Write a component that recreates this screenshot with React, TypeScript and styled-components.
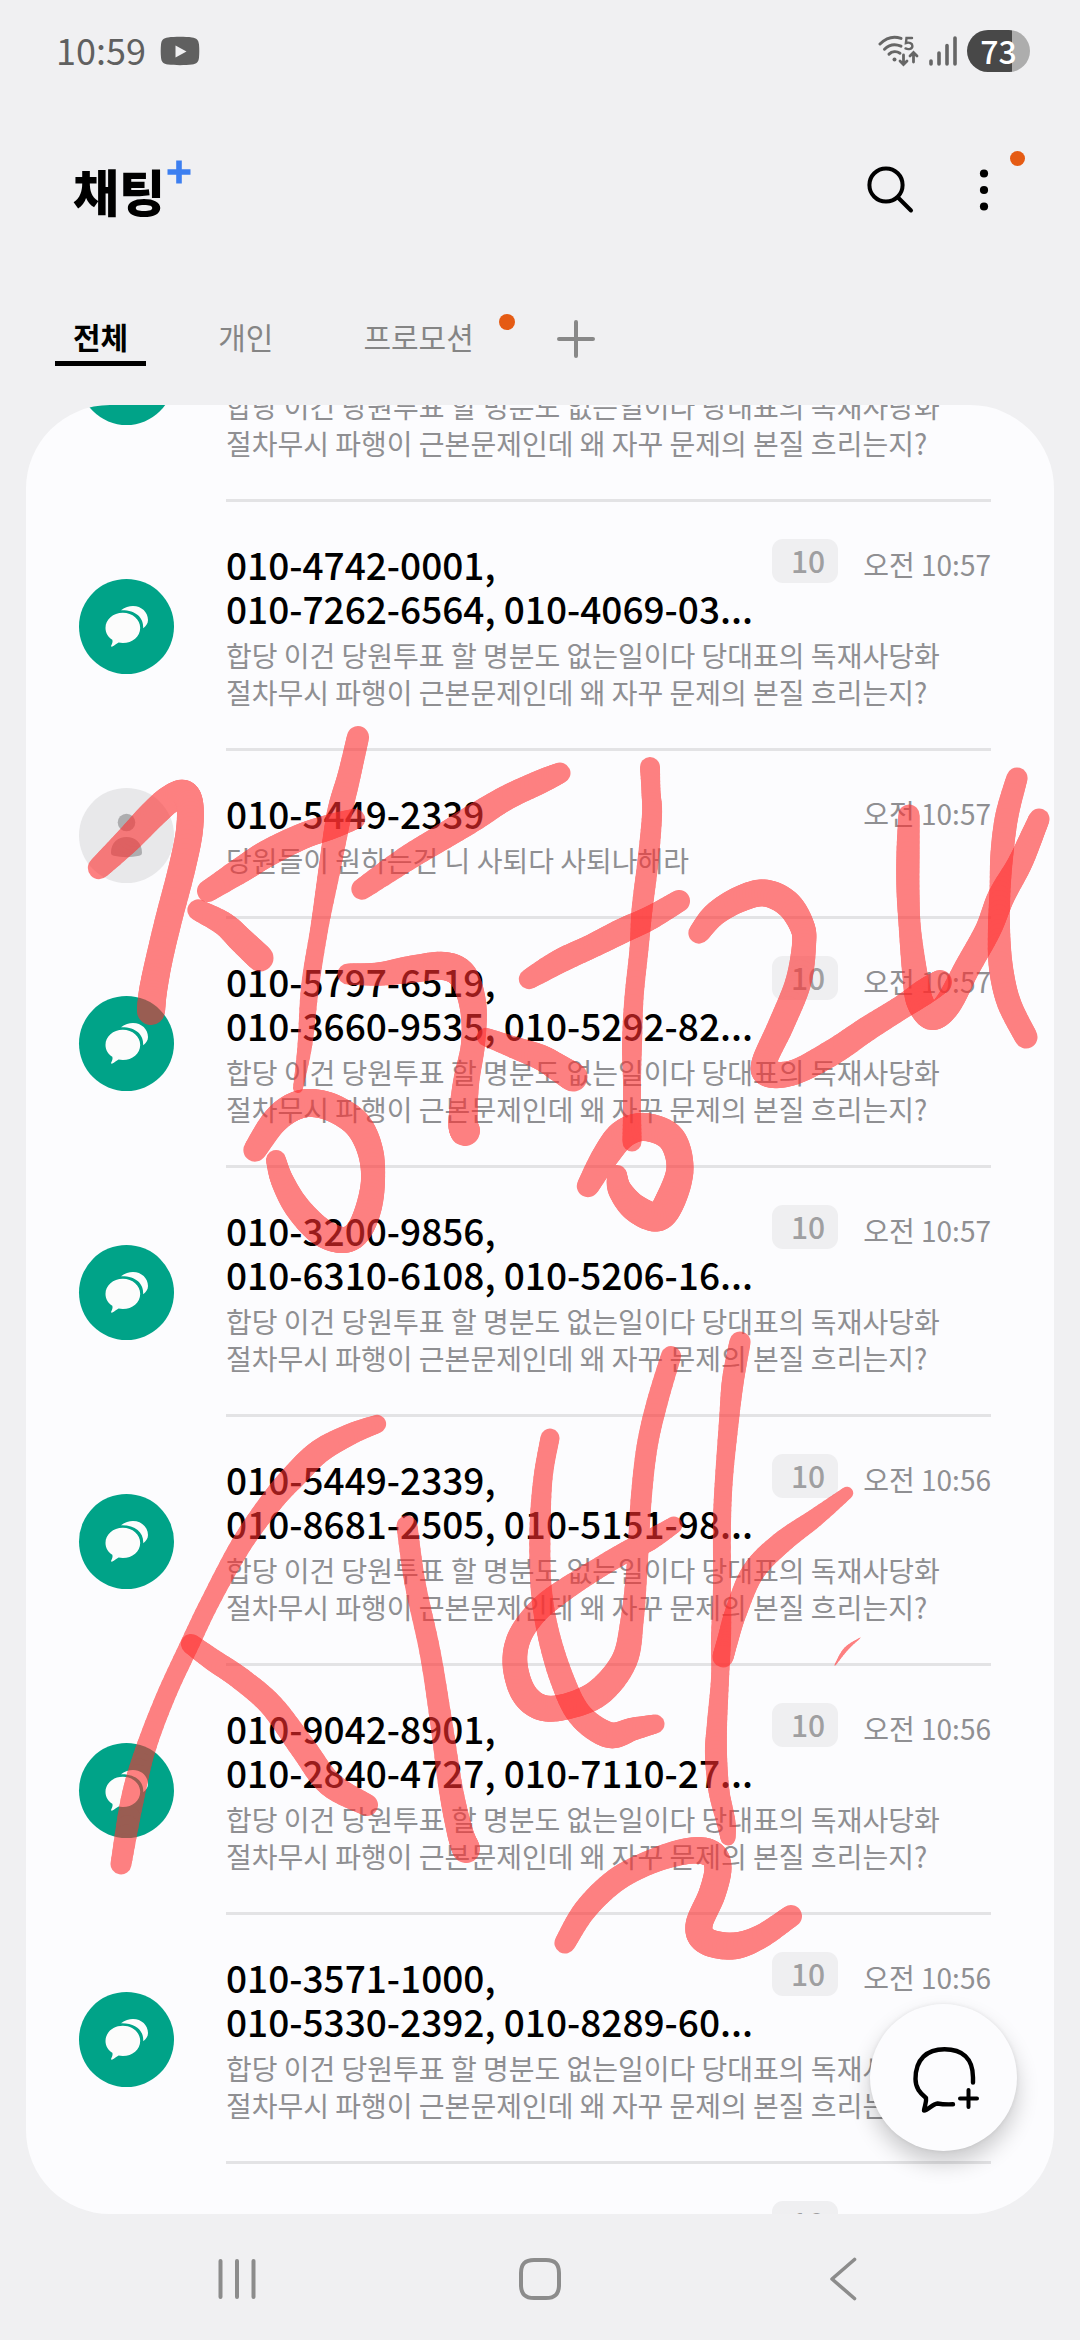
import React, { useLayoutEffect, useRef, useState } from "react";
import styled, { createGlobalStyle } from "styled-components";

const GlobalStyle = createGlobalStyle`
  * { box-sizing: border-box; }
  body {
    margin: 0;
    background: #f0f0f2;
    color: #000;
    font-family: "Noto Sans CJK KR", "Noto Sans", sans-serif;
  }
  button { font: inherit; color: inherit; background: none; border: 0; padding: 0; cursor: pointer; }
  a { color: inherit; text-decoration: none; }
  ul { list-style: none; margin: 0; padding: 0; }
  svg { display: block; }
`;

const Screen = styled.div`
  position: relative;
  display: flex;
  flex-direction: column;
  height: 100vh;
  overflow: hidden;
`;

/* ---------- status bar ---------- */

const StatusBar = styled.div`
  display: flex;
  align-items: center;
  justify-content: space-between;
  height: 102px;
  padding: 0 50px 0 56px;
  flex: none;
`;

const StatusGroup = styled.div<{ $gap: number }>`
  display: flex;
  align-items: center;
  gap: ${(p) => p.$gap}px;
`;

const Clock = styled.span`
  padding-bottom: 4px;
  font-size: 36px;
  line-height: 42px;
  color: #606060;
`;

const Battery = styled.span`
  width: 63px;
  height: 42px;
  border-radius: 21px;
  background: linear-gradient(to right, #484848 72%, #adadad 72%);
  color: #fff;
  font-size: 32px;
  font-weight: 500;
  line-height: 40px;
  text-align: center;
`;

/* ---------- header ---------- */

const Header = styled.header`
  display: flex;
  align-items: center;
  justify-content: space-between;
  height: 176px;
  padding: 0 60px 0 73px;
  flex: none;
`;

const Logo = styled.h1`
  display: flex;
  align-items: center;
  gap: 2px;
  margin: 0;
  font-size: 50px;
  font-weight: 900;
  line-height: 64px;
`;

const LogoPlus = styled.svg`
  align-self: flex-start;
  margin-top: 2px;
`;

const Actions = styled.div`
  display: flex;
  gap: 22px;
`;

const IconButton = styled.button`
  position: relative;
  display: grid;
  place-items: center;
  width: 72px;
  height: 72px;
`;

const Dot = styled.i<{ $size: number; $top: number; $right: number }>`
  position: absolute;
  top: ${(p) => p.$top}px;
  right: ${(p) => p.$right}px;
  width: ${(p) => p.$size}px;
  height: ${(p) => p.$size}px;
  border-radius: 50%;
  background: #e55b14;
`;

/* ---------- tabs ---------- */

const Tabs = styled.nav`
  display: flex;
  align-items: flex-start;
  gap: 54px;
  height: 127px;
  padding: 32px 55px 0;
  flex: none;
`;

const Tab = styled.button<{ $active: boolean }>`
  position: relative;
  height: 56px;
  padding: 0 18px;
  border-bottom: 5px solid ${(p) => (p.$active ? "#000" : "transparent")};
  color: ${(p) => (p.$active ? "#000" : "#858585")};
  font-size: 30px;
  font-weight: ${(p) => (p.$active ? 700 : 400)};
  line-height: 50px;
`;

const AddTab = styled.button`
  display: grid;
  place-items: center;
  width: 60px;
  height: 58px;
`;

/* ---------- conversation list ---------- */

const Panel = styled.main`
  flex: 1;
  min-height: 0;
  margin: 0 26px;
  border-radius: 84px;
  background: #fcfcfe;
  overflow: hidden;
  display: flex;
`;

const Scroller = styled.ul`
  flex: 1;
  min-width: 0;
  overflow-y: auto;
  scrollbar-width: none;
`;

const Row = styled.a`
  display: flex;
  align-items: center;
  gap: 52px;
  padding: 0 63px 0 53px;
`;

const Avatar = styled.span<{ $group: boolean }>`
  flex: none;
  width: 95px;
  height: 95px;
  border-radius: 50%;
  overflow: hidden;
  background: ${(p) => (p.$group ? "#00a388" : "#e8e8ea")};
`;

const Body = styled.div`
  flex: 1;
  min-width: 0;
  padding: 40px 0 37px;
  border-bottom: 3px solid #e3e3e5;
`;

const RowHead = styled.div`
  display: flex;
  align-items: flex-start;
  gap: 14px;
`;

const Numbers = styled.div`
  flex: 1;
  min-width: 0;
  font-size: 37px;
  font-weight: 500;
  line-height: 44px;
`;

const NumberLine = styled.div`
  min-height: 44px;
  white-space: nowrap;
`;

const Meta = styled.div`
  display: flex;
  align-items: center;
  gap: 23px;
  height: 44px;
`;

const Count = styled.span`
  align-self: flex-start;
  width: 66px;
  height: 44px;
  margin-top: -3px;
  padding-left: 6px;
  border-radius: 11px;
  background: #efeff1;
  color: #9f9fa1;
  font-size: 30px;
  font-weight: 500;
  line-height: 42px;
  text-align: center;
`;

const Time = styled.time`
  min-width: 130px;
  color: #8f8f92;
  font-size: 28px;
  line-height: 44px;
  text-align: right;
`;

const Preview = styled.p`
  margin: 7px 0 0;
  color: #8f8f92;
  font-size: 28px;
  line-height: 37px;
  word-break: keep-all;
`;

const ComposeButton = styled.button`
  position: absolute;
  right: 63px;
  bottom: 189px;
  width: 147px;
  height: 147px;
  border-radius: 50%;
  background: #fcfcfe;
  box-shadow: 0 12px 22px rgba(0, 0, 0, 0.2), 0 0 4px rgba(0, 0, 0, 0.08);
`;

/* ---------- navigation bar ---------- */

const NavBar = styled.nav`
  display: flex;
  height: 126px;
  padding: 4px 86px 0;
  flex: none;
`;

const NavButton = styled.button`
  flex: 1;
  display: grid;
  place-items: center;
`;

const InkLayer = styled.svg`
  position: absolute;
  top: 0;
  left: 0;
  width: 100%;
  height: auto;
  pointer-events: none;
`;

/* ---------- icons ---------- */

const YoutubeIcon = () => (
  <svg width="40" height="30" viewBox="0 0 40 30">
    <path d="M8 1.4C15 .6 25 .6 32 1.4c4.600.5 6.600 2.600 7 7 .4 4.600.4 8.600 0 13.200-.4 4.400-2.400 6.500-7 7-7 .8-17 .8-24 0-4.600-.5-6.600-2.600-7-7-.4-4.600-.4-8.600 0-13.200.4-4.400 2.400-6.500 7-7z" fill="#606060" />
    <path d="M15.500 9.500v12L26.500 15.500z" fill="#f0f0f2" />
  </svg>
);

const WifiIcon = () => (
  <svg width="41" height="32" viewBox="0 0 41 32" fill="none" stroke="#666" strokeWidth="3" strokeLinecap="round">
    <path d="M2 9C9 2 16 .8 23 3.400" />
    <path d="M6.500 14.200C11 9.800 17 8.600 23 11.200" />
    <path d="M11 19.200c3-2.900 7.500-3.200 11-1" />
    <circle cx="16.500" cy="24.500" r="2" fill="#666" stroke="none" />
    <path d="M34 3h-5.500l-.6 5c3.500-1 6.500.2 6.500 2.900 0 3-3.700 4-6.900 2.500" strokeWidth="2.400" />
    <path d="M25.500 20v8.500M22 26l3.500 3.500L29 26" strokeWidth="2.800" />
    <path d="M35.500 27v-9M32 21l3.500-3.500L39 21" strokeWidth="2.800" />
  </svg>
);

const SignalIcon = () => (
  <svg width="28" height="30" viewBox="0 0 28 30" stroke="#666" strokeWidth="3.600" strokeLinecap="round">
    <path d="M2 25v3M10 17v11M18 9.500v18.500M26 2v26" />
  </svg>
);

const SearchIcon = () => (
  <svg width="48" height="48" viewBox="0 0 48 48" fill="none" stroke="#000" strokeWidth="4" strokeLinecap="round">
    <circle cx="20" cy="19" r="16.600" />
    <path d="M32.500 32L45 44.500" />
  </svg>
);

const MoreIcon = () => (
  <svg width="10" height="42" viewBox="0 0 10 42">
    <circle cx="5" cy="4.500" r="4.100" />
    <circle cx="5" cy="21" r="4.100" />
    <circle cx="5" cy="37.500" r="4.100" />
  </svg>
);

const PlusIcon = () => (
  <svg width="38" height="38" viewBox="0 0 38 38" stroke="#888" strokeWidth="4" strokeLinecap="round">
    <path d="M19 2v34M2 19h34" />
  </svg>
);

const GroupIcon = () => (
  <svg width="95" height="95" viewBox="0 0 95 95" fill="#fcfcfc">
    <path d="M43.800 33.800c9.700 0 17.400 6.700 17.400 15.100S53.500 64 43.800 64c-1.500 0-2.800-.1-4.200-.4-2.200.9-3.900 3.300-6.700 4.100-.8.100-1-.5-.7-1.200.8-1.800 1.900-3.600 1.100-5.800-4.200-2.700-6.800-7-6.800-11.800 0-8.400 7.600-15.100 17.300-15.100z" />
    <path d="M42 31.200C46 28.200 50 27 54 27c8.500 0 15 6.300 15 14 0 3.400-1.900 6-4.800 8.200C64.900 38.500 56.500 30.800 42 31.200z" />
  </svg>
);

const PersonIcon = () => (
  <svg width="95" height="95" viewBox="0 0 95 95" fill="#adadaf">
    <circle cx="47.500" cy="34.500" r="8.800" />
    <path d="M32 64.500c0-9.700 7-15.500 15.500-15.500S63 54.800 63 64.500c0 2-.8 2.800-2.800 3.200-8 1.900-17.400 1.900-25.400 0-2-.4-2.800-1.200-2.800-3.200z" />
  </svg>
);

const ComposeIcon = () => (
  <svg width="147" height="147" viewBox="0 0 147 147" fill="none" stroke="#000" strokeWidth="4.400" strokeLinecap="round" strokeLinejoin="round">
    <path d="M103 78.500V73.500C103 54 92 45.200 74.500 45.200S45.500 55 45.500 75c0 9 4.500 14 10.500 19 .8 4.500-1.500 8.500-2 12.500 4.500-.2 8-6.500 13.500-7 5.500 1 10 1 15.500.8" />
    <path d="M98.500 86v17M90 94.500h17" strokeWidth="4" />
  </svg>
);

/* ---------- ink ---------- */

type InkPoint = [x: number, y: number, width: number];

const STROKES: InkPoint[][] = [
  [[99, 868, 21], [128, 840, 25], [152, 815, 27], [170, 799, 27], [184, 794, 27], [190, 806, 26], [189, 834, 26], [181, 872, 26], [169, 918, 26], [159, 960, 26], [153, 991, 27], [151, 1011, 27]],
  [[358, 737, 21], [349, 776, 22], [339, 815, 24], [329, 872, 21], [319, 930, 17], [310, 987, 17], [305, 1044, 14], [298, 1088, 9]],
  [[355, 819, 19], [330, 827, 24], [303, 836, 25], [268, 853, 26], [241, 870, 25], [208, 891, 21]],
  [[198, 910, 20], [224, 924, 23], [241, 940, 25], [260, 958, 26]],
  [[255, 1150, 22], [273, 1123, 25], [291, 1108, 27], [310, 1103, 27], [333, 1108, 27], [357, 1124, 27], [370, 1150, 25], [373, 1180, 23], [368, 1210, 25], [357, 1233, 25], [342, 1240, 25], [320, 1231, 27], [297, 1207, 25], [282, 1180, 22], [276, 1160, 19]],
  [[362, 889, 20], [406, 859, 24], [444, 836, 25], [475, 817, 26], [506, 798, 24], [540, 782, 23], [560, 773, 20]],
  [[348, 974, 20], [379, 974, 22], [413, 969, 26], [444, 966, 27], [463, 976, 28], [473, 1006, 26], [473, 1044, 23], [466, 1083, 25], [463, 1121, 28], [465, 1131, 29]],
  [[486, 1037, 17], [510, 1046, 20], [540, 1057, 24], [557, 1067, 26], [573, 1077, 28]],
  [[650, 767, 19], [651, 792, 18], [652, 815, 19], [648, 861, 20], [642, 910, 20], [639, 949, 18], [634, 998, 18], [632, 1044, 19], [632, 1083, 17], [632, 1113, 17], [632, 1142, 18]],
  [[529, 979, 19], [560, 961, 23], [592, 946, 23], [622, 931, 24], [650, 918, 23], [679, 901, 21]],
  [[588, 1186, 21], [606, 1155, 26], [623, 1134, 28], [645, 1127, 27], [671, 1138, 27], [680, 1168, 26], [670, 1201, 29], [657, 1217, 28], [635, 1208, 27], [620, 1190, 23], [617, 1175, 19]],
  [[699, 933, 20], [715, 914, 23], [740, 899, 25], [765, 893, 26], [788, 904, 26], [802, 926, 24], [804, 945, 23], [798, 983, 25], [781, 1025, 25], [764, 1063, 24], [770, 1074, 26], [795, 1072, 24], [833, 1052, 25], [867, 1029, 24], [902, 1007, 23], [926, 991, 25], [940, 982, 23]],
  [[909, 815, 20], [908, 853, 22], [908, 891, 22], [910, 930, 21], [915, 975, 24], [920, 1002, 26], [932, 1017, 25], [948, 1004, 26], [967, 968, 25], [988, 930, 25], [1001, 897, 26], [1019, 865, 24], [1031, 838, 22], [1039, 819, 20]],
  [[1017, 778, 20], [1007, 815, 22], [1002, 853, 22], [1000, 891, 20], [999, 930, 21], [1001, 968, 23], [1009, 1003, 23], [1026, 1037, 22]],
  [[377, 1424, 17], [351, 1434, 20], [320, 1451, 23], [296, 1474, 24], [272, 1501, 22], [241, 1545, 20], [210, 1602, 18], [188, 1648, 18], [165, 1698, 18], [145, 1751, 19], [132, 1801, 22], [121, 1864, 20]],
  [[191, 1644, 19], [213, 1660, 21], [241, 1679, 22], [272, 1706, 23], [303, 1748, 25], [330, 1784, 25], [367, 1805, 21]],
  [[407, 1526, 20], [415, 1583, 20], [430, 1652, 20], [441, 1721, 21], [451, 1790, 23], [460, 1832, 25], [466, 1849, 27]],
  [[550, 1438, 18], [543, 1478, 18], [540, 1530, 20], [541, 1586, 20], [548, 1632, 21], [562, 1679, 23], [580, 1715, 24], [609, 1735, 25], [633, 1729, 22], [655, 1724, 18]],
  [[671, 1356, 19], [657, 1403, 20], [647, 1447, 20], [641, 1501, 20], [637, 1568, 20], [632, 1621, 22], [624, 1661, 25], [598, 1693, 27], [564, 1707, 25], [540, 1707, 25], [523, 1692, 25], [515, 1664, 24], [519, 1638, 23], [535, 1614, 22], [557, 1595, 22], [592, 1572, 20], [626, 1552, 20], [650, 1540, 20], [674, 1525, 16]],
  [[740, 1342, 20], [733, 1380, 21], [729, 1420, 19], [724, 1478, 17], [722, 1523, 17], [722, 1590, 17], [721, 1639, 19], [720, 1679, 17], [717, 1724, 19], [716, 1755, 21], [719, 1791, 20], [726, 1822, 18], [728, 1838, 14]],
  [[847, 1493, 11], [815, 1518, 17], [781, 1543, 21], [753, 1572, 22], [736, 1612, 21], [728, 1639, 20], [723, 1657, 20]],
  [[565, 1943, 20], [585, 1910, 22], [616, 1880, 23], [653, 1861, 23], [688, 1851, 25], [710, 1853, 26], [718, 1867, 26], [712, 1894, 26], [699, 1925, 26], [706, 1941, 26], [733, 1946, 26], [760, 1937, 23], [791, 1916, 21]],
  [[835, 1665, 0], [846, 1649, 3], [860, 1638, 0]],
];

const catmull = (a: number, b: number, c: number, d: number, t: number) =>
  0.5 * (2 * b + (c - a) * t + (2 * a - 5 * b + 4 * c - d) * t * t + (3 * b - a - 3 * c + d) * t * t * t);

/** Splits a pressure-sensitive stroke into short segments of smoothly varying width. */
function segments(points: InkPoint[]): InkPoint[] {
  const out: InkPoint[] = [];
  const steps = 8;
  for (let i = 0; i < points.length - 1; i++) {
    const p0 = points[Math.max(i - 1, 0)];
    const p1 = points[i];
    const p2 = points[i + 1];
    const p3 = points[Math.min(i + 2, points.length - 1)];
    for (let s = 0; s < steps; s++) {
      const t = s / steps;
      out.push([0, 1, 2].map((k) => catmull(p0[k], p1[k], p2[k], p3[k], t)) as InkPoint);
    }
  }
  out.push(points[points.length - 1]);
  return out;
}

const Ink = () => (
  <InkLayer viewBox="0 0 1080 2340" aria-hidden="true" stroke="#ff2f2f" strokeLinecap="round">
    {STROKES.map((stroke, i) => {
      const pts = segments(stroke);
      return (
        <g key={i} opacity="0.6">
          {pts.slice(1).map((p, j) => (
            <line key={j} x1={pts[j][0]} y1={pts[j][1]} x2={p[0]} y2={p[1]} strokeWidth={p[2] + 1} />
          ))}
        </g>
      );
    })}
  </InkLayer>
);

/* ---------- data ---------- */

const GROUP_TEXT =
  "합당 이건 당원투표 할 명분도 없는일이다 당대표의 독재사당화 절차무시 파행이 근본문제인데 왜 자꾸 문제의 본질 흐리는지?";

interface Conversation {
  numbers: string[];
  count?: number;
  time?: string;
  text: string;
}

const CONVERSATIONS: Conversation[] = [
  { numbers: ["", ""], text: GROUP_TEXT },
  { numbers: ["010-4742-0001,", "010-7262-6564, 010-4069-03..."], count: 10, time: "10:57", text: GROUP_TEXT },
  { numbers: ["010-5449-2339"], time: "10:57", text: "당원들이 원하는건 니 사퇴다 사퇴나해라" },
  { numbers: ["010-5797-6519,", "010-3660-9535, 010-5292-82..."], count: 10, time: "10:57", text: GROUP_TEXT },
  { numbers: ["010-3200-9856,", "010-6310-6108, 010-5206-16..."], count: 10, time: "10:57", text: GROUP_TEXT },
  { numbers: ["010-5449-2339,", "010-8681-2505, 010-5151-98..."], count: 10, time: "10:56", text: GROUP_TEXT },
  { numbers: ["010-9042-8901,", "010-2840-4727, 010-7110-27..."], count: 10, time: "10:56", text: GROUP_TEXT },
  { numbers: ["010-3571-1000,", "010-5330-2392, 010-8289-60..."], count: 10, time: "10:56", text: GROUP_TEXT },
  { numbers: ["", ""], count: 10, text: GROUP_TEXT },
];

const TABS = ["전체", "개인", "프로모션"];
const SAVED_SCROLL = 152;

export default function App() {
  const [tab, setTab] = useState(0);
  const list = useRef<HTMLUListElement>(null);

  useLayoutEffect(() => {
    if (list.current) list.current.scrollTop = SAVED_SCROLL;
  }, []);

  return (
    <>
      <GlobalStyle />
      <Screen>
        <StatusBar>
          <StatusGroup $gap={14}>
            <Clock>10:59</Clock>
            <YoutubeIcon />
          </StatusGroup>
          <StatusGroup $gap={10}>
            <WifiIcon />
            <SignalIcon />
            <Battery>73</Battery>
          </StatusGroup>
        </StatusBar>

        <Header>
          <Logo>
            채팅
            <LogoPlus width="24" height="24" viewBox="0 0 24 24" stroke="#3d7ff0" strokeWidth="5.600">
              <path d="M12 .5v23M.5 12h23" />
            </LogoPlus>
          </Logo>
          <Actions>
            <IconButton aria-label="검색">
              <SearchIcon />
            </IconButton>
            <IconButton aria-label="옵션 더보기">
              <MoreIcon />
              <Dot $size={15} $top={-3} $right={-5} />
            </IconButton>
          </Actions>
        </Header>

        <Tabs>
          {TABS.map((label, i) => (
            <Tab key={label} $active={tab === i} onClick={() => setTab(i)}>
              {label}
              {i === 2 && <Dot $size={16} $top={4} $right={-23} />}
            </Tab>
          ))}
          <AddTab aria-label="카테고리 추가">
            <PlusIcon />
          </AddTab>
        </Tabs>

        <Panel>
          <Scroller ref={list}>
            {CONVERSATIONS.map((c, i) => {
              const group = c.numbers.length > 1;
              return (
                <li key={i}>
                  <Row href="#">
                    <Avatar $group={group}>{group ? <GroupIcon /> : <PersonIcon />}</Avatar>
                    <Body>
                      <RowHead>
                        <Numbers>
                          {c.numbers.map((n, k) => (
                            <NumberLine key={k}>{n}</NumberLine>
                          ))}
                        </Numbers>
                        <Meta>
                          {c.count && <Count>{c.count}</Count>}
                          <Time>{c.time && `오전 ${c.time}`}</Time>
                        </Meta>
                      </RowHead>
                      <Preview>{c.text}</Preview>
                    </Body>
                  </Row>
                </li>
              );
            })}
          </Scroller>
        </Panel>

        <ComposeButton aria-label="새 대화">
          <ComposeIcon />
        </ComposeButton>

        <NavBar>
          <NavButton aria-label="최근 앱">
            <svg width="40" height="42" viewBox="0 0 40 42" stroke="#8c8c8c" strokeWidth="4" strokeLinecap="round">
              <path d="M3.500 3v36M20 3v36M36.500 3v36" />
            </svg>
          </NavButton>
          <NavButton aria-label="홈">
            <svg width="42" height="42" viewBox="0 0 42 42" fill="none" stroke="#8c8c8c" strokeWidth="4">
              <path d="M15 2h12c9 0 13 4 13 13v12c0 9-4 13-13 13H15C6 40 2 36 2 27V15C2 6 6 2 15 2z" />
            </svg>
          </NavButton>
          <NavButton aria-label="뒤로">
            <svg width="28" height="44" viewBox="0 0 28 44" fill="none" stroke="#8c8c8c" strokeWidth="3.600" strokeLinecap="round" strokeLinejoin="round">
              <path d="M25.500 2.500L3 22l22.500 19.500" />
            </svg>
          </NavButton>
        </NavBar>

        <Ink />
      </Screen>
    </>
  );
}
